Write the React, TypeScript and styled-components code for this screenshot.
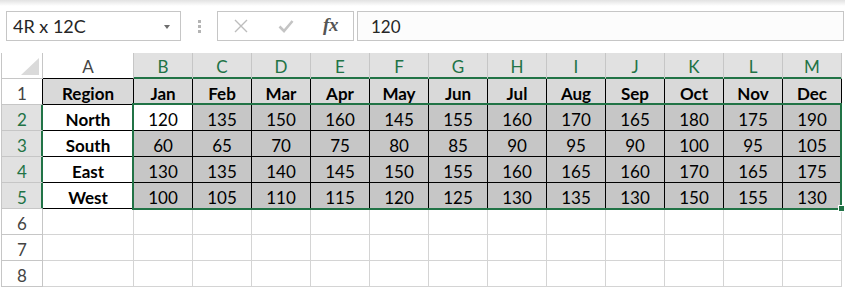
import React from 'react';
import styled, { createGlobalStyle, css } from 'styled-components';

const GREEN = '#217346';
const GRID = '#d4d4d4';
const HEAD_LINE = '#c6c6c6';

const GlobalStyle = createGlobalStyle`
  html, body { margin: 0; padding: 0; background: #fff; overflow: hidden; }
  body { font-family: Lato, "Open Sans", sans-serif; }
  * { box-sizing: border-box; }
`;

const Page = styled.div`
  width: 845px;
  height: 287px;
  display: flex;
  flex-direction: column;
  overflow: hidden;
`;

const TopShade = styled.div`
  height: 11px;
  background: linear-gradient(#e2e2e2 0px, #fff 6px);
`;

// formula bar
const FormulaBar = styled.div`
  display: flex;
  height: 30px;
  padding-left: 6px;
`;

const NameBox = styled.div`
  width: 175px;
  border: 1px solid ${HEAD_LINE};
  display: flex;
  align-items: center;
  justify-content: space-between;
  padding: 0 10px 0 6px;
  font-size: 18px;
  color: #262626;
`;

const DropArrow = styled.span`
  width: 0;
  height: 0;
  border-left: 3.5px solid transparent;
  border-right: 3.5px solid transparent;
  border-top: 4px solid #6d6d6d;
  margin-top: 1px;
`;

const Grip = styled.div`
  width: 36px;
  display: flex;
  flex-direction: column;
  align-items: center;
  justify-content: center;
  gap: 2px;
  padding-left: 1px;
`;

const GripDot = styled.span`
  width: 3px;
  height: 3px;
  background: #b4b4b4;
`;

const FxBox = styled.div`
  width: 137px;
  border: 1px solid ${HEAD_LINE};
  display: grid;
  grid-template-columns: repeat(3, 1fr);
  align-items: center;
  justify-items: center;
`;

const FxLabel = styled.span`
  font-family: "Liberation Serif", "DejaVu Serif", serif;
  font-style: italic;
  font-weight: 700;
  font-size: 19px;
  color: #555;
  letter-spacing: -0.5px;
  margin-bottom: 3px;
`;

const FormulaInput = styled.div`
  flex: 1;
  margin-left: 3px;
  margin-right: 1px;
  border: 1px solid ${HEAD_LINE};
  background: #fcfcfc;
  display: flex;
  align-items: center;
  padding-left: 13px;
  font-size: 17px;
  color: #262626;
`;

// sheet
const Sheet = styled.div`
  position: relative;
  margin-top: 12px;
  margin-left: 1px;
  border-left: 1px solid ${HEAD_LINE};
  display: grid;
  grid-template-columns: 41px 91px repeat(12, 59px);
  grid-template-rows: repeat(9, 26px);
`;

const Corner = styled.div`
  position: relative;
  border-right: 1px solid ${HEAD_LINE};
  border-bottom: 1px solid ${HEAD_LINE};
  &::after {
    content: '';
    position: absolute;
    right: 3px;
    bottom: 3px;
    width: 0;
    height: 0;
    border-left: 18px solid transparent;
    border-bottom: 17px solid #dadada;
  }
`;

const ColHead = styled.div<{ $sel?: boolean; $edge?: string }>`
  display: flex;
  align-items: center;
  justify-content: center;
  padding-top: 2px;
  font-size: 17px;
  color: #444;
  border-right: 1px solid ${HEAD_LINE};
  border-bottom: 1px solid ${(p) => p.$edge || HEAD_LINE};
  ${(p) =>
    p.$sel &&
    css`
      background: #e1e1e1;
      color: ${GREEN};
      border-bottom-color: ${GREEN};
      box-shadow: inset 0 -1px 0 ${GREEN};
    `}
`;

const RowHead = styled.div<{ $sel?: boolean; $edge?: string }>`
  display: flex;
  align-items: center;
  justify-content: center;
  padding-top: 3px;
  font-size: 17px;
  color: #444;
  border-right: 1px solid ${(p) => p.$edge || HEAD_LINE};
  border-bottom: 1px solid ${HEAD_LINE};
  ${(p) =>
    p.$sel &&
    css`
      background: #e1e1e1;
      color: ${GREEN};
      border-right-color: ${GREEN};
      box-shadow: inset -1px 0 0 ${GREEN};
    `}
`;

const Cell = styled.div<{ $fill?: string; $bold?: boolean; $boxed?: boolean }>`
  display: flex;
  align-items: center;
  justify-content: center;
  padding-top: 3px;
  font-size: 17px;
  color: #000;
  background: ${(p) => p.$fill || '#fff'};
  font-weight: ${(p) => (p.$bold ? 700 : 400)};
  border-right: 1px solid ${(p) => (p.$boxed ? '#000' : GRID)};
  border-bottom: 1px solid ${(p) => (p.$boxed ? '#000' : GRID)};
`;

const Selection = styled.div`
  position: absolute;
  left: 130px;
  top: 50px;
  width: 710px;
  height: 107px;
  border: 2px solid ${GREEN};
  pointer-events: none;
`;

const FillHandle = styled.div`
  position: absolute;
  left: 836px;
  top: 152px;
  width: 7px;
  height: 7px;
  background: ${GREEN};
  border: 1px solid #fff;
`;

const months = ['Jan', 'Feb', 'Mar', 'Apr', 'May', 'Jun', 'Jul', 'Aug', 'Sep', 'Oct', 'Nov', 'Dec'];
const letters = ['B', 'C', 'D', 'E', 'F', 'G', 'H', 'I', 'J', 'K', 'L', 'M'];

const data: [string, number[]][] = [
  ['North', [120, 135, 150, 160, 145, 155, 160, 170, 165, 180, 175, 190]],
  ['South', [60, 65, 70, 75, 80, 85, 90, 95, 90, 100, 95, 105]],
  ['East', [130, 135, 140, 145, 150, 155, 160, 165, 160, 170, 165, 175]],
  ['West', [100, 105, 110, 115, 120, 125, 130, 135, 130, 150, 155, 130]],
];

const App: React.FC = () => {
  return (
    <Page>
      <GlobalStyle />
      <TopShade />
      <FormulaBar>
        <NameBox>
          <span>4R x 12C</span>
          <DropArrow />
        </NameBox>
        <Grip>
          <GripDot />
          <GripDot />
          <GripDot />
        </Grip>
        <FxBox>
          <svg width="14" height="14" viewBox="0 0 14 14">
            <path d="M1 1 L13 13 M13 1 L1 13" stroke="#bdbdbd" strokeWidth="1.4" fill="none" />
          </svg>
          <svg width="16" height="14" viewBox="0 0 16 14">
            <path d="M1.5 7.5 L6 12 L14.5 2" stroke="#c4c4c4" strokeWidth="2.6" fill="none" />
          </svg>
          <FxLabel>fx</FxLabel>
        </FxBox>
        <FormulaInput>120</FormulaInput>
      </FormulaBar>

      <Sheet>
        <Corner />
        <ColHead $edge="#000">A</ColHead>
        {letters.map((l) => (
          <ColHead key={l} $sel>
            {l}
          </ColHead>
        ))}

        <RowHead $edge="#000">1</RowHead>
        <Cell $fill="#d9d9d9" $bold $boxed>
          Region
        </Cell>
        {months.map((m) => (
          <Cell key={m} $fill="#d9d9d9" $bold $boxed>
            {m}
          </Cell>
        ))}

        {data.map(([region, values], r) => (
          <React.Fragment key={region}>
            <RowHead $sel>{r + 2}</RowHead>
            <Cell $bold $boxed>
              {region}
            </Cell>
            {values.map((v, c) => (
              <Cell key={c} $boxed $fill={r === 0 && c === 0 ? '#fff' : '#c6c6c6'}>
                {v}
              </Cell>
            ))}
          </React.Fragment>
        ))}

        {[6, 7, 8].map((n) => (
          <React.Fragment key={n}>
            <RowHead>{n}</RowHead>
            {Array.from({ length: 13 }).map((_, c) => (
              <Cell key={c} />
            ))}
          </React.Fragment>
        ))}

        <Selection />
        <FillHandle />
      </Sheet>
    </Page>
  );
};

export default App;
